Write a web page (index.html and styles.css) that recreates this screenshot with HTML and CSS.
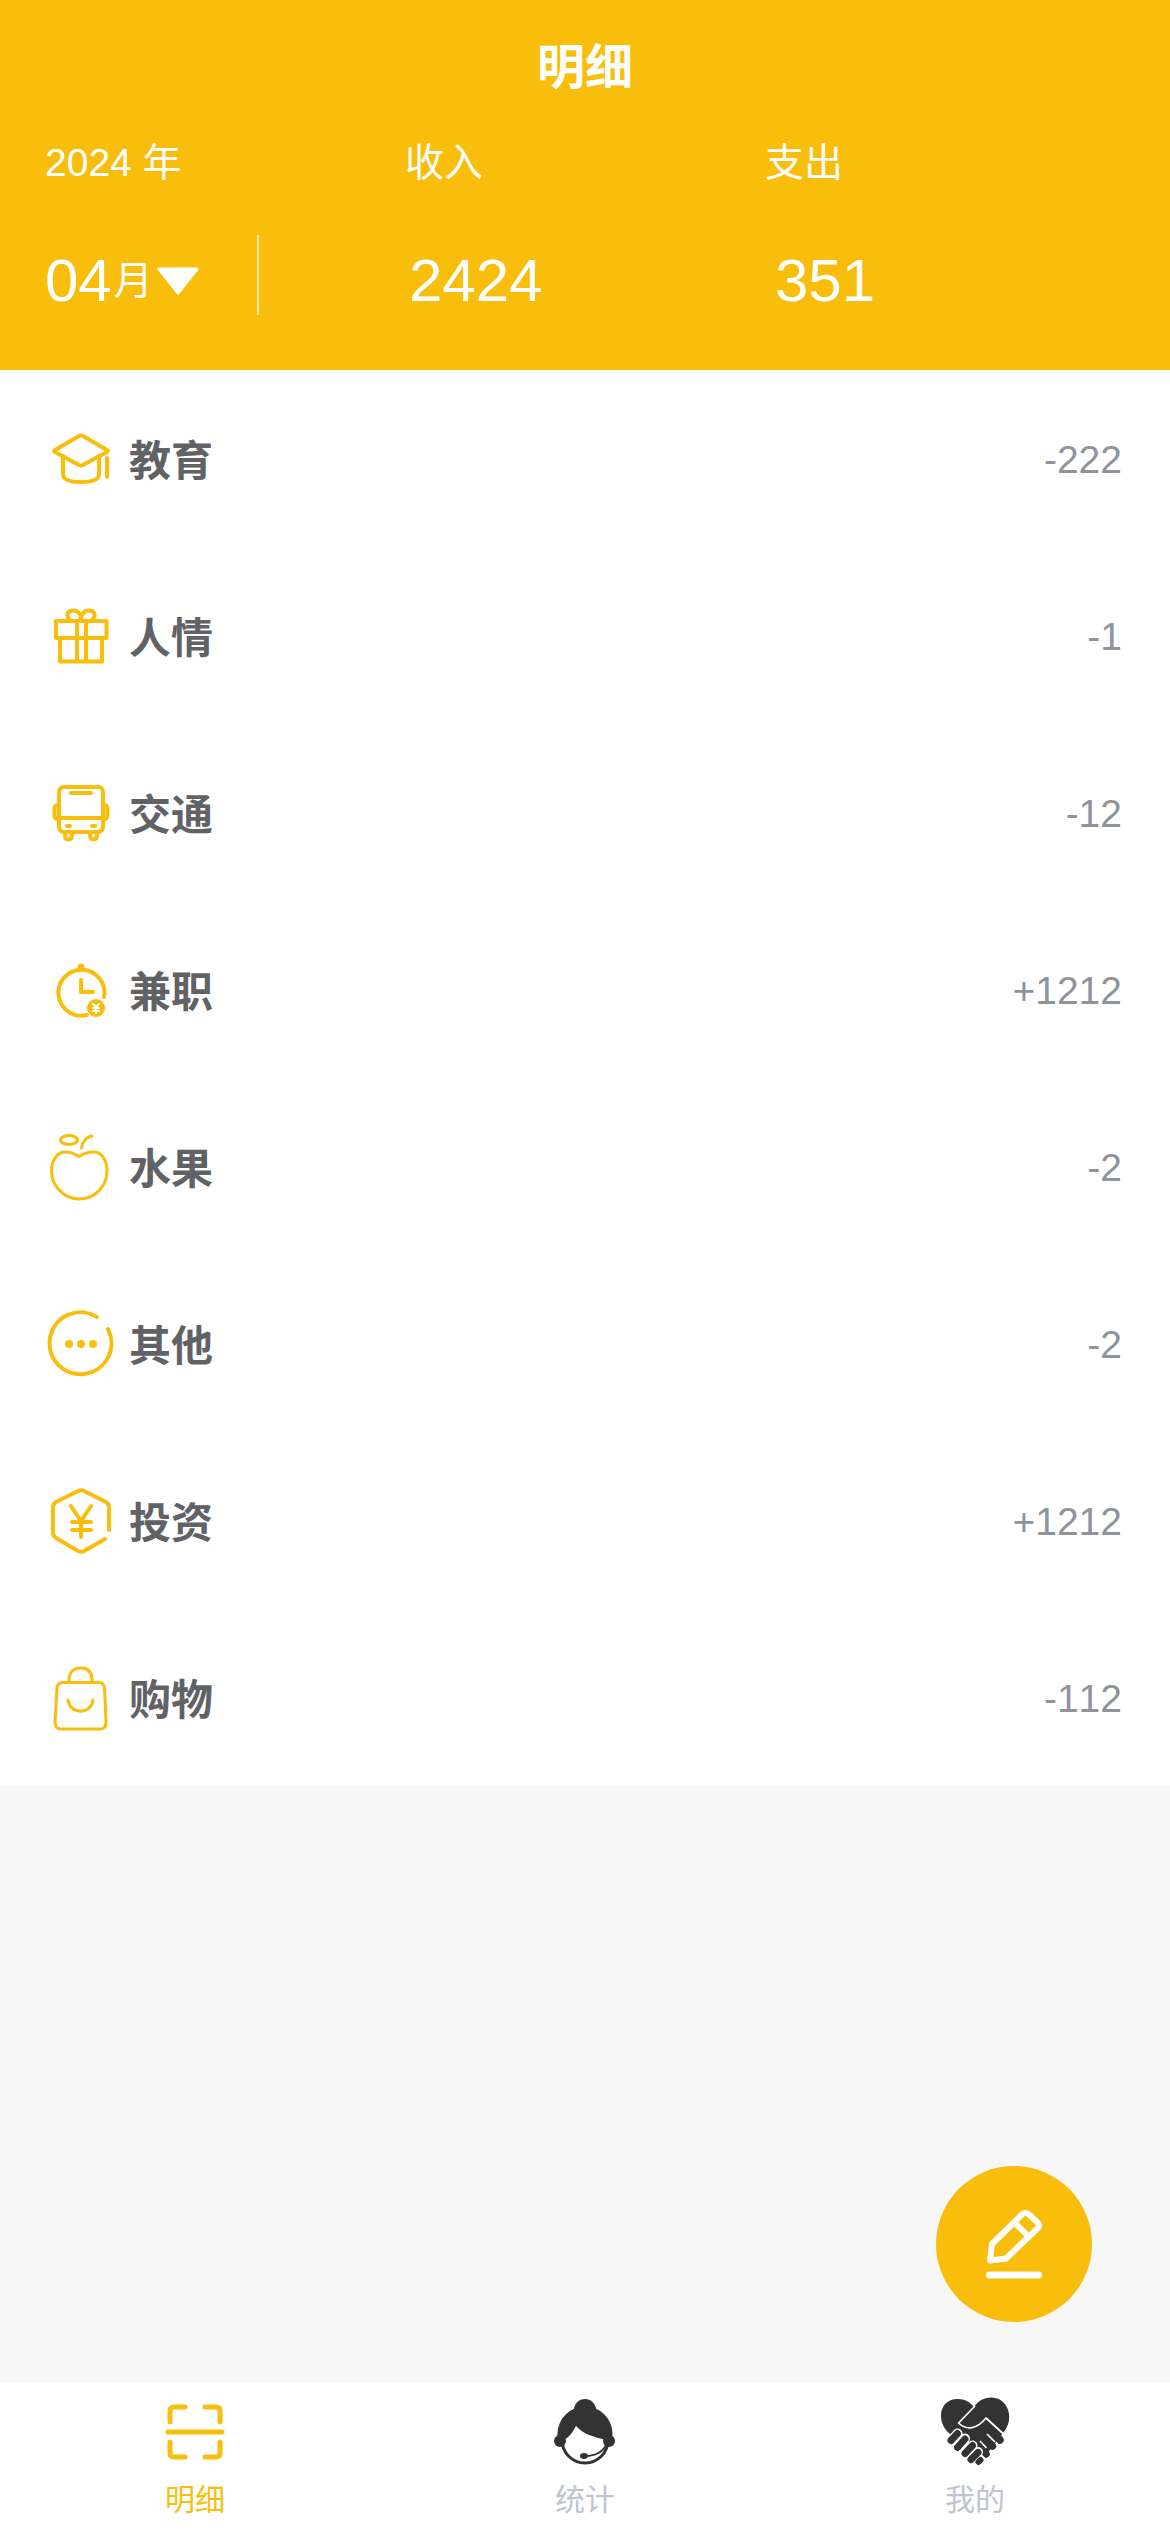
FILE: index.html
```html
<!DOCTYPE html>
<html lang="zh-CN">
<head>
<meta charset="utf-8">
<meta name="viewport" content="width=device-width, initial-scale=1">
<title>明细</title>
<link rel="stylesheet" href="styles.css">
</head>
<body>
<div class="page">
  <header class="header">
    <h1 class="title">明细</h1>
    <div class="labels">
      <span>2024 年</span>
      <span>收入</span>
      <span>支出</span>
    </div>
    <div class="totals">
      <button class="month" type="button">
        <span class="month-number">04</span>
        <span class="month-unit">月</span>
        <svg class="caret" viewBox="0 0 42 30" aria-hidden="true"><path d="M2 3H40L21 27Z"/></svg>
      </button>
      <span class="divider"></span>
      <span class="total">2424</span>
      <span class="total">351</span>
    </div>
  </header>

  <main class="main">
    <ul class="list">
      <li class="row">
        <svg class="icon bold" viewBox="0 0 72 72" aria-hidden="true"><path d="M34 13Q36 12 38 13L62 27Q64 28 62 29L38 42Q36 43 34 42L10 29Q8 28 10 27Z"/><path d="M18 33V51C18 57 27 59 36 59S54 57 54 51V33M62 35V54"/></svg>
        <span class="name">教育</span>
        <span class="amount">-222</span>
      </li>
      <li class="row">
        <svg class="icon medium" viewBox="0 0 72 72" aria-hidden="true"><rect x="11" y="21" width="50.500" height="17"/><path d="M15 38V61.500H57V38M32 21V61M41 21V61"/><path d="M25 20C20 15 23 10.500 28 10.500C33 10.500 36 14 36 20C36 14 39 10.500 44 10.500C49 10.500 52 15 47 20"/></svg>
        <span class="name">人情</span>
        <span class="amount">-1</span>
      </li>
      <li class="row">
        <svg class="icon medium" viewBox="0 0 72 72" aria-hidden="true"><rect x="14" y="10" width="44" height="45" rx="5"/><path d="M14 41H58M26 16H46M22 49H25M47 49H50"/><path d="M14 28H13Q9.500 28 9.500 32V38Q9.500 42 13 42H14M58 28H59Q62.500 28 62.500 32V38Q62.500 42 59 42H58"/><path d="M20 56V58Q20 62.500 23.500 62.500T27 58V56M45 56V58Q45 62.500 48.500 62.500T52 58V56"/></svg>
        <span class="name">交通</span>
        <span class="amount">-12</span>
      </li>
      <li class="row">
        <svg class="icon medium" viewBox="0 0 72 72" aria-hidden="true"><path d="M59 43A23 23 0 1 0 42 61"/><path d="M36 26V38H48"/><circle class="solid" cx="36" cy="13" r="3.500"/><circle class="solid" cx="51" cy="54" r="9"/><path class="cutout" d="M48 50L51 53L54 50M48 54H54M48 57H54M51 53V59"/></svg>
        <span class="name">兼职</span>
        <span class="amount">+1212</span>
      </li>
      <li class="row">
        <svg class="icon" viewBox="0 0 72 72" aria-hidden="true"><path d="M34 25.500C28 21.500 24 20.500 19 21C11 22 6.500 31 6.500 40C6.500 55 19 68 34.500 68S62 55 62 40C62 31 58 22 50 21C45 20.500 40 21.500 34 25.500Z"/><ellipse cx="24" cy="9" rx="8.500" ry="4.500"/><path d="M36.500 17C37 11 41 6 47 5"/></svg>
        <span class="name">水果</span>
        <span class="amount">-2</span>
      </li>
      <li class="row">
        <svg class="icon bold" viewBox="0 0 72 72" aria-hidden="true"><path d="M52 9A31 31 0 1 0 63 21"/><circle class="solid" cx="24" cy="36" r="4"/><circle class="solid" cx="36" cy="36" r="4"/><circle class="solid" cx="48" cy="36" r="4"/></svg>
        <span class="name">其他</span>
        <span class="amount">-2</span>
      </li>
      <li class="row">
        <svg class="icon bold" viewBox="0 0 72 72" aria-hidden="true"><path d="M64 45V22Q64 19 61 17L39 6Q36 4.500 33 6L11 17Q8 19 8 22V48Q8 51 11 53L33 66Q36 67.500 39 66L60 54"/><path d="M26 21L36 36L46 21M27 37H46M27 45H46M36 36V52"/></svg>
        <span class="name">投资</span>
        <span class="amount">+1212</span>
      </li>
      <li class="row">
        <svg class="icon" viewBox="0 0 72 72" aria-hidden="true"><path d="M18 20.500H54Q59 20.500 59.500 26L61 60Q61 67 55 67H16Q10 67 10 60L12 26Q12.500 20.500 18 20.500Z"/><path d="M24 20V18C24 10 29 6 36 6S47 10 47 18V20"/><path d="M23 38C25 53 46 53 48 38"/></svg>
        <span class="name">购物</span>
        <span class="amount">-112</span>
      </li>
    </ul>
    <button class="add" type="button" aria-label="记一笔">
      <svg class="add-icon" viewBox="0 0 72 72" aria-hidden="true"><path d="M14 36L44 6.500Q47.500 3.500 51 6.500L60 15Q62 17.500 60 20L28 50.500L12 52.500ZM37 15L51 29"/><path d="M11.500 67H60.500" stroke-width="7"/></svg>
    </button>
  </main>

  <nav class="tabs">
    <a class="tab active" href="#detail">
      <svg class="icon scan" viewBox="0 0 72 72" aria-hidden="true"><path d="M11 26V15Q11 11 15 11H26M46 11H57Q61 11 61 15V26M61 46V57Q61 61 57 61H46M26 61H15Q11 61 11 57V46M9 36H63"/></svg>
      <span>明细</span>
    </a>
    <a class="tab" href="#stats">
      <svg class="tab-icon" viewBox="0 0 72 72" aria-hidden="true"><circle cx="36" cy="44" r="23" fill="#fff" stroke="#333" stroke-width="3"/><circle cx="36" cy="14" r="11"/><circle cx="11" cy="45" r="6"/><circle cx="60" cy="45" r="6"/><path d="M8.500 44V38A27.500 27.500 0 0 1 63.500 38V46L57 50V44C45 41 34 38 27 30C24 36 20 41 15 44V50Z"/><path d="M36 60C45 60 54 57 58 47" fill="none" stroke="#333" stroke-width="2"/><ellipse cx="35" cy="60" rx="4" ry="3"/></svg>
      <span>统计</span>
    </a>
    <a class="tab" href="#mine">
      <svg class="tab-icon" viewBox="0 0 72 72" aria-hidden="true">
        <path d="M11 38C-3 27 -1 3 19 3C26 3 31 6 35 11C39 5 45 1.500 52 1.500C70 1.500 76 24 64 37L50 55L43 59L20 36Z"/>
        <path d="M47 27L61 44M43 34L53.500 50M40 44L47 58" stroke="#333" stroke-width="7.500" stroke-linecap="round"/>
        <path d="M36 10L19.500 27C28 35 38 33 47 22L64.500 38M48 38L56 46M41 45L47.500 52" fill="none" stroke="#fff" stroke-width="1.700" stroke-linejoin="round"/>
        <g fill="none" stroke-linecap="round"><path d="M18.500 37.500L12 45M26 42.500L19 51.500M33.500 49.500L26 58M39 56L32 63.500M41.500 64L39.500 66" stroke="#fff" stroke-width="10"/><path d="M18.500 37.500L12 44.500M26 43L18.500 51.500M33.500 49.500L26 57.500M39 56.500L32 63.500" stroke="#333" stroke-width="7"/><path d="M41.500 64L39.500 66" stroke="#333" stroke-width="6"/></g>
      </svg>
      <span>我的</span>
    </a>
  </nav>
</div>
</body>
</html>
```
FILE: styles.css
```css
* {
  box-sizing: border-box;
}

body {
  margin: 0;
  font-family: "Liberation Sans", "Noto Sans CJK SC", sans-serif;
  font-size: 39px;
  font-kerning: none;
  background: #f7f7f7;
}

button {
  margin: 0;
  padding: 0;
  border: 0;
  background: none;
  color: inherit;
  font: inherit;
}

svg {
  flex: none;
}

.page {
  display: flex;
  flex-direction: column;
  min-height: 100vh;
}

/* Header */

.header {
  padding: 35px 0 43px 45px;
  background: #f9bd0c;
  color: #fff;
}

.title {
  margin: 0 45px 32px 0;
  font-size: 48px;
  line-height: 66px;
  text-align: center;
}

.labels {
  display: grid;
  grid-template-columns: repeat(3, 1fr);
  margin: 0 45px 42px 0;
  line-height: 60px;
}

.totals {
  display: grid;
  grid-template-columns: 212fr 152fr 366fr 395fr;
  line-height: 92px;
}

.month {
  display: flex;
  align-items: center;
  line-height: 92px;
}

.month-number,
.total {
  font-size: 60px;
}

.month-unit {
  margin-left: 2px;
}

.caret {
  width: 42px;
  height: 30px;
  margin-left: 4px;
  fill: #fff;
  stroke: #fff;
  stroke-width: 3;
  stroke-linejoin: round;
}

.divider {
  width: 2px;
  height: 80px;
  background: #fdeaae;
}

/* Records */

.main {
  position: relative;
  flex: 1;
}

.list {
  margin: 0;
  padding: 0;
  list-style: none;
  background: #fff;
}

.row {
  display: flex;
  align-items: center;
  gap: 12px;
  height: 177px;
  padding: 0 48px 0 45px;
}

.icon {
  width: 72px;
  height: 72px;
  fill: none;
  stroke: #f9bd0c;
  stroke-width: 3;
  stroke-linecap: round;
  stroke-linejoin: round;
}

.medium,
.bold {
  stroke-width: 4;
}

.scan {
  stroke-width: 5;
}

.solid {
  fill: #f9bd0c;
  stroke: none;
}

.cutout {
  stroke: #fff;
  stroke-width: 2;
}

.name {
  flex: 1;
  padding-bottom: 3px;
  color: #606266;
  font-size: 42px;
  font-weight: 700;
}

.amount {
  padding-top: 3px;
  color: #909399;
}

.add {
  position: absolute;
  right: 78px;
  bottom: 60px;
  display: grid;
  place-items: center;
  width: 156px;
  height: 156px;
  border-radius: 50%;
  background: #f9bd0c;
}

.add-icon {
  width: 72px;
  height: 72px;
  fill: none;
  stroke: #fff;
  stroke-width: 6;
  stroke-linecap: round;
  stroke-linejoin: round;
}

/* Tab bar */

.tabs {
  display: grid;
  grid-template-columns: repeat(3, 1fr);
  padding: 14px 0 11px;
  background: #fff;
}

.tab {
  display: flex;
  flex-direction: column;
  align-items: center;
  gap: 11px;
  color: #c0c4cc;
  font-size: 30px;
  line-height: 42px;
  text-decoration: none;
}

.tab-icon {
  width: 72px;
  height: 72px;
  fill: #333;
}

.active {
  color: #f9bd0c;
}
```
